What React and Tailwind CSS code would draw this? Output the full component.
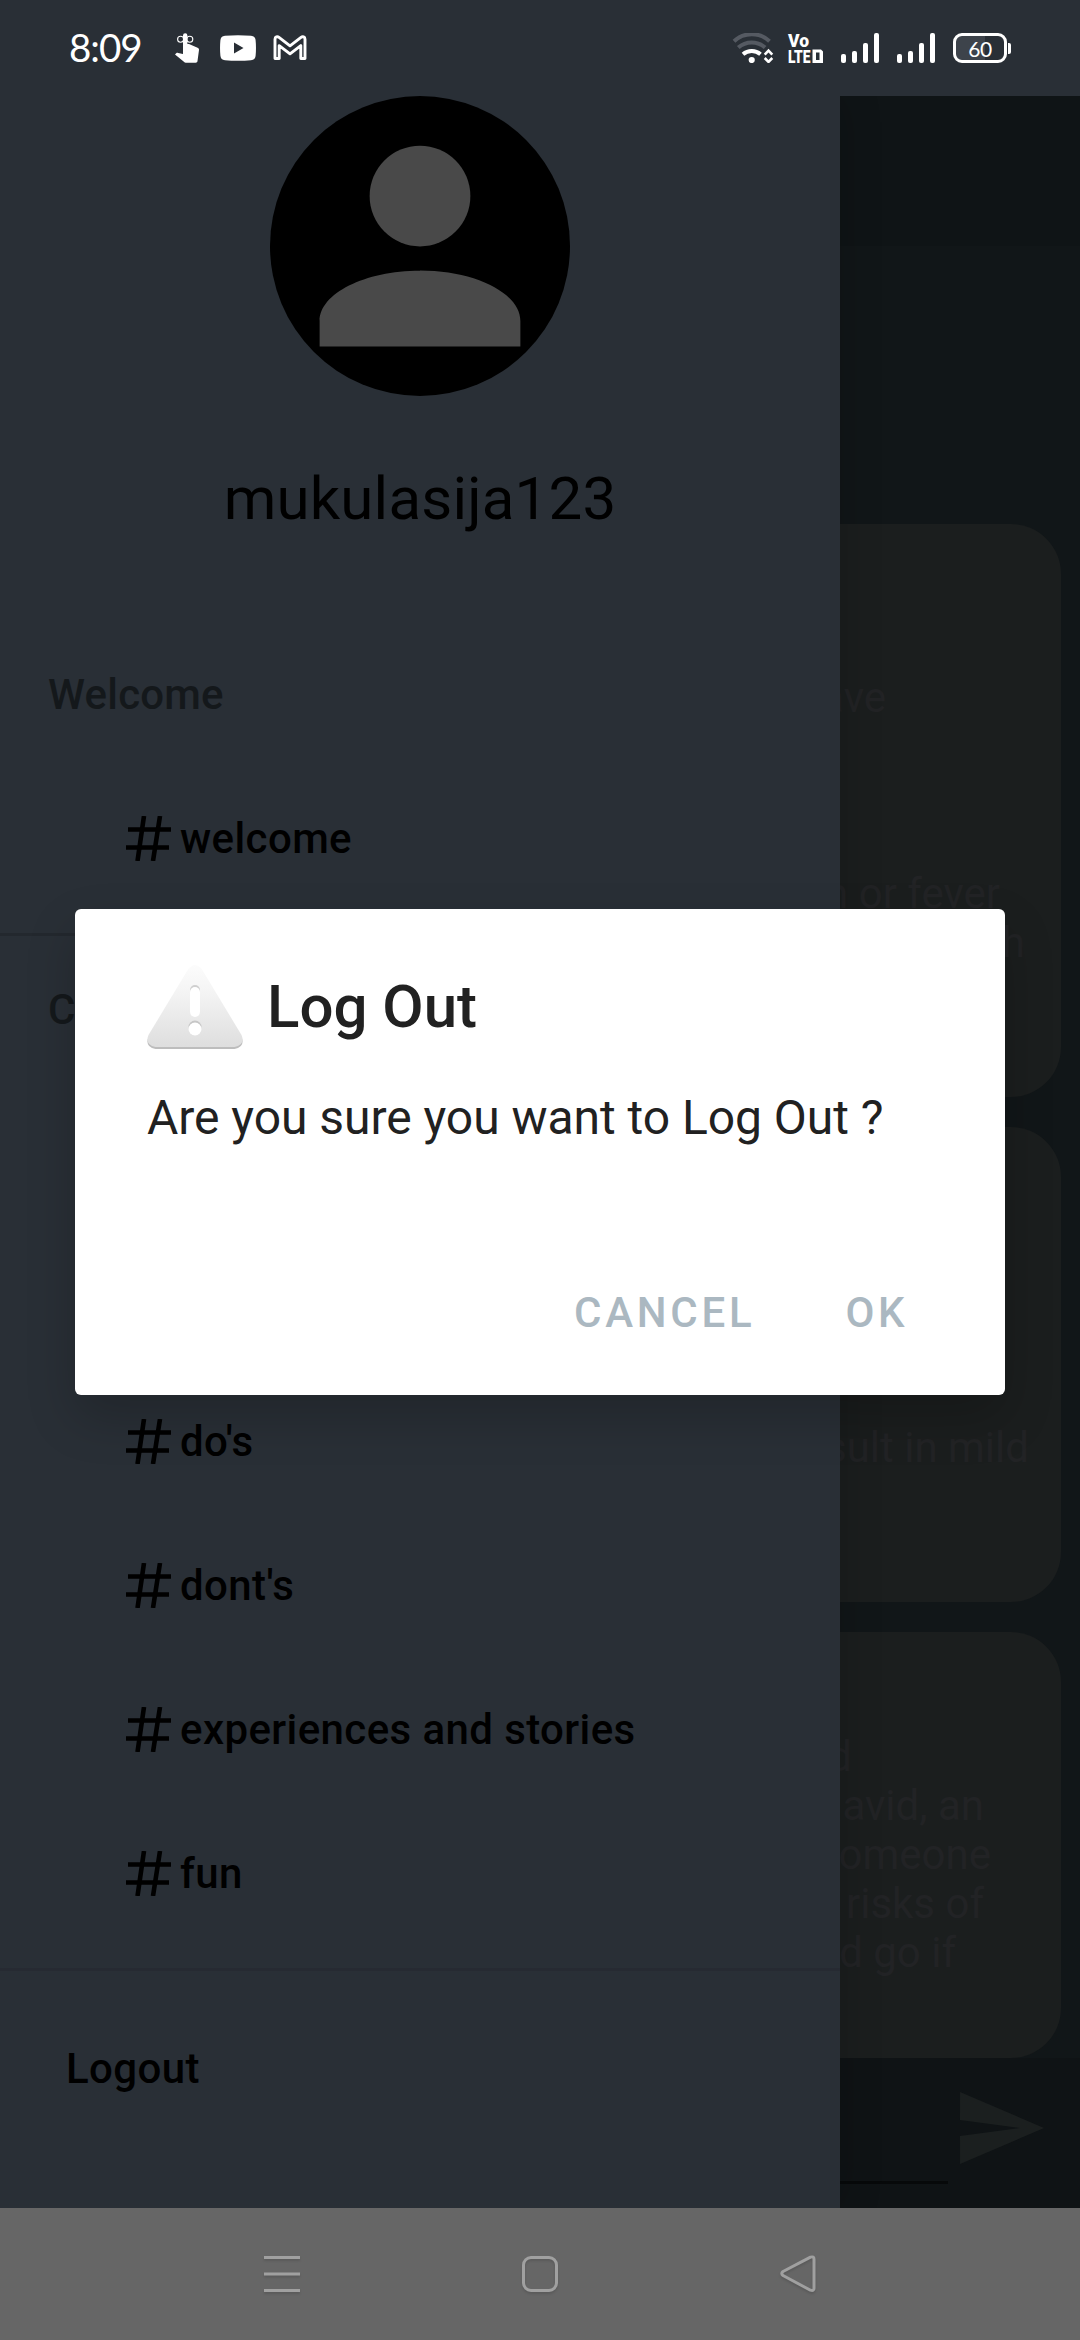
import React from "react";

function SignalBars() {
  return (
    <div className="flex h-[30px] items-end gap-[6px]">
      <i className="h-[9px] w-[5px] rounded-[2px] bg-white" />
      <i className="h-[12px] w-[5px] rounded-[2px] bg-white" />
      <i className="h-[20px] w-[5px] rounded-[2px] bg-white" />
      <i className="h-[30px] w-[5px] rounded-[2px] bg-white" />
    </div>
  );
}

function StatusBar() {
  return (
    <header className="flex h-24 w-full shrink-0 items-start bg-[#292f36] pt-[33px] pl-[69px] text-white">
      <span className="mt-[-9px] w-[106px] font-['Lato'] text-[38.5px] leading-[47px] tracking-[-1px]">8:09</span>
      <svg className="h-[30px] w-[25px]" viewBox="0 0 25 30" fill="none">
        <circle cx="5.6" cy="6.2" r="3" stroke="#fff" strokeWidth="1.1" />
        <circle cx="14.8" cy="6.2" r="3" stroke="#fff" strokeWidth="1.1" />
        <path d="M8 2.4a2.2 2.2 0 0 1 4.4 0V11h1.6l8.6 3.8c1.2.5 1.5 1.2 1.4 2.2L22.500 28c-.1 1-.8 1.700-1.800 1.700H10.800c-.8 0-1.300-.3-1.900-.9L0 21.500l1.200-1.200c.6-.5 1.200-.6 1.900-.4L8 21z" fill="#fff" />
      </svg>
      <svg className="mt-[2px] ml-5 h-[26px] w-9" viewBox="0 0 36 26">
        <path fill="#fff" fillRule="evenodd" d="M5 .8C13 .1 23 .1 31 .8c3 .3 4.300 1.700 4.600 4.500.5 5 .5 10.400 0 15.400-.3 2.800-1.600 4.200-4.600 4.500-8 .7-18 .7-26 0-3-.3-4.300-1.700-4.600-4.500-.5-5-.5-10.400 0-15.400C.7 2.500 2 1.100 5 .8zM14 7.500v11l9.500-5.500z" />
      </svg>
      <svg className="mt-[2px] ml-[17px] h-[25px] w-[34px]" viewBox="0 0 34 25" fill="none">
        <path d="M2 23.500h4.200V10.600L17 18.800l10.800-8.200v12.900H32V4.200c0-2.400-2.300-3.100-4-1.800l-11 8.400L6 2.400C4.300 1.100 2 1.800 2 4.200z" stroke="#fff" strokeWidth="2.900" strokeLinejoin="round" />
      </svg>
      <div className="ml-[425px] flex">
        <svg className="h-[30px] w-[42px]" viewBox="0 0 42 30" fill="none">
          <path d="M2 8.200a26 26 0 0 1 35.500 0" stroke="#555a62" strokeWidth="4" />
          <path d="M6.300 14.600a20 20 0 0 1 26.800 0" stroke="#555a62" strokeWidth="4" />
          <path d="M11 21.300a13.500 13.500 0 0 1 17.500 0" stroke="#fff" strokeWidth="4" />
          <circle cx="19.700" cy="27" r="3.100" fill="#fff" />
          <path d="M32.700 21.600l3.800-3.900 3.800 3.900M32.700 25l3.800 3.900L40.300 25" stroke="#fff" strokeWidth="2.600" />
        </svg>
        <svg className="ml-[14px] h-[31px] w-9 overflow-visible" viewBox="0 0 36 31" fill="#fff" fontFamily="Roboto" fontWeight="900">
          <text x="0" y="14" fontSize="19" textLength="21" lengthAdjust="spacingAndGlyphs">Vo</text>
          <text x="0" y="30" fontSize="19" textLength="22.500" lengthAdjust="spacingAndGlyphs">LTE</text>
          <path fillRule="evenodd" d="M24.500 16.500h8.500l2 2v11.500H24.500zM28 19.500v7.500h3.500v-7.500z" />
        </svg>
        <div className="ml-[17px] flex gap-[18px]">
          <SignalBars />
          <SignalBars />
        </div>
        <div className="ml-[18px] flex h-[30px] w-[54px] items-center justify-center rounded-[9px] border-[3px] border-white bg-[linear-gradient(90deg,#3d434b_60%,#292f36_60%)] font-['Lato'] text-[21px] leading-none font-normal tracking-[-0.5px]">60</div>
        <i className="mt-[10px] ml-[1px] h-[11px] w-[3px] rounded-r-[2px] bg-white" />
      </div>
    </header>
  );
}

function Card({ className, children }) {
  return (
    <section className={"flex w-[1042px] shrink-0 flex-col items-end rounded-[50px] bg-[#1b1e1e] " + className}>
      {children}
    </section>
  );
}

function ChatScreen() {
  return (
    <div className="flex h-[2112px] w-full flex-col bg-[#111618] text-[42px] leading-[49px] text-[#222325]">
      <div className="h-[150px] shrink-0 bg-[#0f1416]" />
      <div className="flex h-[1812px] shrink-0 flex-col gap-[30px] pt-[278px] pl-[19px]">
        <Card className="h-[573px] pt-[149px]">
          <p className="mr-[175px]">ave</p>
          <p className="mt-[147px] mr-[61px]">n or fever</p>
          <p className="mr-[36px]">h</p>
        </Card>
        <Card className="h-[475px] pt-[296px]">
          <p className="mr-[32px]">sult in mild</p>
        </Card>
        <Card className="h-[426px] pt-[100px]">
          <p className="mr-[209px]">d</p>
          <p className="mr-[77px]">avid, an</p>
          <p className="mr-[70px]">omeone</p>
          <p className="mr-[77px]">risks of</p>
          <p className="mr-[105px]">d go if</p>
        </Card>
      </div>
      <div className="flex h-[150px] items-start bg-[#0f1315]">
        <div className="mt-[123px] h-[3px] w-[948px] bg-[#07090a]" />
        <svg className="mt-[22px] ml-1 h-24 w-24" viewBox="0 0 24 24" fill="#1b1f1f">
          <path d="M2.010 21L23 12 2.010 3 2 10l15 2-15 2z" />
        </svg>
      </div>
    </div>
  );
}

function Channel({ name }) {
  return (
    <li className="flex h-36 items-center pl-[126px]">
      <svg className="h-[45px] w-[45px]" viewBox="0 0 45 45" fill="none" stroke="#000" strokeWidth="4.600">
        <path d="M2 13.500H45M0 31.500H43" />
        <path d="M18 0L11.500 45M34 0L27 45" />
      </svg>
      <span className="ml-[9px]">{name}</span>
    </li>
  );
}

function Drawer() {
  return (
    <div className="absolute top-24 left-0 h-[2112px] w-full overflow-hidden">
      <aside className="flex h-full w-[840px] flex-col bg-[#292f36] text-[42px] leading-[49px] font-medium tracking-[0.4px] text-black shadow-[0_0_40px_rgba(0,0,0,0.2)]">
        <div className="flex h-[525px] shrink-0 flex-col items-center">
          <svg className="h-[300px] w-[300px] rounded-full bg-black" viewBox="0 0 24 24" fill="#494949">
            <circle cx="12" cy="8" r="4.030" />
            <path d="M12 13.970c-4.420 0-8.030 1.820-8.030 4.030v2.040h16.060V18c0-2.210-3.610-4.030-8.030-4.030z" />
          </svg>
          <h1 className="mt-[68px] text-[60px] leading-[70px] font-normal tracking-[0.2px]">mukulasija123</h1>
        </div>
        <h2 className="h-[145px] shrink-0 pt-[49px] pl-12 tracking-[0.2px] text-[#14181b]">Welcome</h2>
        <ul className="h-[167px] shrink-0">
          <Channel name="welcome" />
        </ul>
        <hr className="h-[3px] shrink-0 border-0 bg-[#23282e]" />
        <h2 className="h-[145px] shrink-0 pt-[49px] pl-12 text-[#14181b]">C</h2>
        <ul className="h-[887px] shrink-0 pt-72">
          <Channel name="do's" />
          <Channel name="dont's" />
          <Channel name="experiences and stories" />
          <Channel name="fun" />
        </ul>
        <hr className="h-[3px] shrink-0 border-0 bg-[#262a32]" />
        <button className="mt-[73px] pl-[66px] text-left">Logout</button>
      </aside>
    </div>
  );
}

function WarningIcon() {
  return (
    <svg className="h-[88px] w-24" viewBox="0 0 96 88">
      <defs>
        <linearGradient id="warn" x1="0" y1="0" x2="0" y2="1">
          <stop offset="0" stopColor="#fcfcfc" />
          <stop offset="0.3" stopColor="#f5f5f5" />
          <stop offset="1" stopColor="#dedede" />
        </linearGradient>
      </defs>
      <path d="M1.500 74L41 8h14l39.500 66q4 10-7 12H8.500q-11-2-7-12z" fill="#bdbdbd" />
      <path d="M41 6.500q7-9 14 0L94.500 72q4 10-7 12H8.500q-11-2-7-12z" fill="url(#warn)" />
      <rect x="43" y="22" width="10" height="31" rx="5" fill="#cfcfcf" />
      <rect x="43" y="24" width="10" height="30" rx="5" fill="#fff" />
      <circle cx="48" cy="64" r="6.500" fill="#c6c6c6" />
      <circle cx="48" cy="66" r="6.500" fill="#fff" />
    </svg>
  );
}

function Dialog() {
  return (
    <div className="absolute top-[909px] left-[75px] flex h-[486px] w-[930px] flex-col rounded-[6px] bg-white text-[#212121] shadow-[0_22px_50px_rgba(0,0,0,0.2)]">
      <div className="flex h-[141px] shrink-0 items-start pt-[54px] pl-[72px]">
        <WarningIcon />
        <h2 className="mt-[9px] ml-6 text-[60px] leading-[70px] font-medium">Log Out</h2>
      </div>
      <p className="mt-[40px] pl-[72px] text-[48px] leading-[56px] tracking-[-0.04px]">Are you sure you want to Log Out ?</p>
      <div className="mt-[142px] flex gap-[90px] pl-[499px] text-[42px] leading-[49px] font-medium tracking-[3.75px] text-[#abb8c1]">
        <button>CANCEL</button>
        <button>OK</button>
      </div>
    </div>
  );
}

function NavBar() {
  return (
    <nav className="flex h-[132px] items-start justify-center gap-[220px] bg-[#666] pt-[46px]">
      <svg className="h-10 w-10 drop-shadow-[0_2px_1px_rgba(0,0,0,0.12)]" viewBox="0 0 40 40" stroke="#a0a0a0" strokeWidth="3" strokeLinecap="butt">
        <path d="M4 3.500H40M4 20H40M4 36.500H40" />
      </svg>
      <svg className="h-10 w-10 drop-shadow-[0_2px_1px_rgba(0,0,0,0.12)]" viewBox="0 0 40 40" fill="none" stroke="#a0a0a0" strokeWidth="3">
        <rect x="3.500" y="3.500" width="33" height="33" rx="7.500" />
      </svg>
      <svg className="h-10 w-10 drop-shadow-[0_2px_1px_rgba(0,0,0,0.12)]" viewBox="0 0 40 40" fill="none" stroke="#a0a0a0" strokeWidth="3" strokeLinejoin="round">
        <path d="M3 17.500L30.500 3.200q3.500-1.200 3.500 2V34.200q0 3.200-3.500 2L3 21.500q-2.500-2 0-4z" />
      </svg>
    </nav>
  );
}

export default function App() {
  return (
    <main className="relative flex h-[2340px] w-[1080px] flex-col overflow-hidden bg-[#111618] font-['Roboto',sans-serif]">
      <StatusBar />
      <ChatScreen />
      <Drawer />
      <NavBar />
      <Dialog />
    </main>
  );
}
